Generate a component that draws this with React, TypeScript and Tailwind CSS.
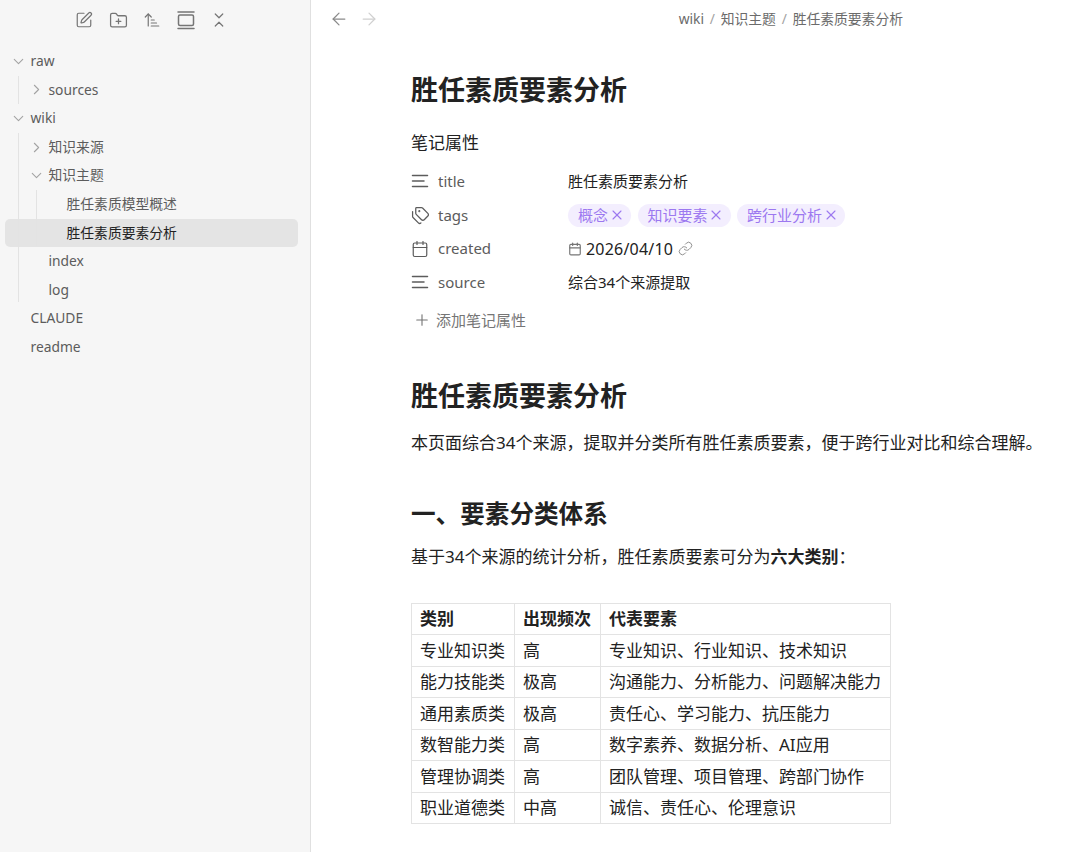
import {
  ArrowLeft,
  ArrowRight,
  ArrowUpNarrowWide,
  Calendar,
  ChevronDown,
  ChevronRight,
  ChevronsDownUp,
  FolderPlus,
  Link as LinkIcon,
  Plus,
  SquarePen,
  Tags,
  X,
} from "lucide-react";

const FONT = "font-['Noto_Sans','Noto_Sans_CJK_SC',sans-serif]";

interface TreeRow {
  label: string;
  depth: number;
  caret?: "open" | "closed";
  active?: boolean;
}

const TREE: TreeRow[] = [
  { label: "raw", depth: 0, caret: "open" },
  { label: "sources", depth: 1, caret: "closed" },
  { label: "wiki", depth: 0, caret: "open" },
  { label: "知识来源", depth: 1, caret: "closed" },
  { label: "知识主题", depth: 1, caret: "open" },
  { label: "胜任素质模型概述", depth: 2 },
  { label: "胜任素质要素分析", depth: 2, active: true },
  { label: "index", depth: 1 },
  { label: "log", depth: 1 },
  { label: "CLAUDE", depth: 0 },
  { label: "readme", depth: 0 },
];

const ROWS = [
  ["专业知识类", "高", "专业知识、行业知识、技术知识"],
  ["能力技能类", "极高", "沟通能力、分析能力、问题解决能力"],
  ["通用素质类", "极高", "责任心、学习能力、抗压能力"],
  ["数智能力类", "高", "数字素养、数据分析、AI应用"],
  ["管理协调类", "高", "团队管理、项目管理、跨部门协作"],
  ["职业道德类", "中高", "诚信、责任心、伦理意识"],
];

const TAGS = ["概念", "知识要素", "跨行业分析"];

function Lines() {
  return (
    <svg width="18" height="18" viewBox="0 0 18 18" fill="none" stroke="#5c5c5c" strokeWidth="1.5" strokeLinecap="round">
      <path d="M1.5 3.5h15M1.5 9h11.5M1.5 14.5h15" />
    </svg>
  );
}

function FrameIcon() {
  return (
    <svg width="18" height="20" viewBox="0 0 18 20" fill="none" stroke="#757575" strokeWidth="1.5" strokeLinecap="round">
      <path d="M1 2h16M1 18.5h16" />
      <rect x="1.5" y="5" width="15" height="10.5" rx="1.5" />
    </svg>
  );
}

function Sidebar() {
  const iconClass = "text-[#757575]";
  return (
    <aside className="flex h-full w-[311px] shrink-0 flex-col border-r border-[#e0e0e0] bg-[#f6f6f6]">
      <div className="flex h-[47px] shrink-0 items-center gap-[15.5px] pb-[7px] pl-[75px]">
        <SquarePen size={18} strokeWidth={1.6} className={iconClass} />
        <FolderPlus size={19} strokeWidth={1.6} className={iconClass} />
        <ArrowUpNarrowWide size={18} strokeWidth={1.6} className={iconClass} />
        <FrameIcon />
        <ChevronsDownUp size={18} strokeWidth={1.6} className={iconClass} />
      </div>
      <div className="relative pl-[5px] pr-[12px]">
        <div className="absolute left-[18px] top-[29px] h-[28px] w-px bg-[#e3e3e3]" />
        <div className="absolute left-[18px] top-[86px] h-[169px] w-px bg-[#e3e3e3]" />
        <div className="absolute left-[36px] top-[143px] h-[56px] w-px bg-[#e3e3e3]" />
        {TREE.map((row) => (
          <div
            key={row.label}
            className={`flex h-[28.6px] items-center rounded-[5px] text-[13.8px] ${
              row.active ? "bg-black/[0.07] text-[#222222]" : "text-[#5c5c5c]"
            }`}
            style={{ paddingLeft: 7 + row.depth * 18 }}
          >
            <span className="flex w-[18.5px] shrink-0 items-center justify-start">
              {row.caret === "open" && <ChevronDown size={17} strokeWidth={1.5} className="-ml-[2.5px] text-[#a3a3a3]" />}
              {row.caret === "closed" && <ChevronRight size={17} strokeWidth={1.5} className="-ml-[2.5px] text-[#a3a3a3]" />}
            </span>
            {row.label}
          </div>
        ))}
      </div>
    </aside>
  );
}

function PropRow({ icon, name, children }: { icon: React.ReactNode; name: string; children: React.ReactNode }) {
  return (
    <div className="flex h-[33.7px] items-center text-[15px]">
      <span className="flex w-[27px] shrink-0 items-center">{icon}</span>
      <span className="w-[130px] shrink-0 text-[#5c5c5c]">{name}</span>
      <div className="flex items-center text-[#222222]">{children}</div>
    </div>
  );
}

function Properties() {
  return (
    <div className="mt-[21px]">
      <div className="text-[17px] leading-[24px] text-[#222222]">笔记属性</div>
      <div className="mt-[9.5px]">
        <PropRow icon={<Lines />} name="title">
          胜任素质要素分析
        </PropRow>
        <PropRow icon={<Tags size={19} strokeWidth={1.6} className="text-[#5c5c5c]" />} name="tags">
          <div className="flex gap-[6.5px]">
            {TAGS.map((tag) => (
              <span
                key={tag}
                className="flex h-[23px] items-center gap-[3.5px] rounded-full bg-[#f3eefe] pl-[10px] pr-[9.5px] text-[#9c78f0]"
              >
                {tag}
                <X size={16} strokeWidth={1.6} className="-mx-[3px]" />
              </span>
            ))}
          </div>
        </PropRow>
        <PropRow icon={<Calendar size={18} strokeWidth={1.6} className="text-[#5c5c5c]" />} name="created">
          <Calendar size={14} strokeWidth={2} className="mr-[4px] text-[#757575]" />
          <span className="text-[16px] tracking-[0.2px]">2026/04/10</span>
          <LinkIcon size={15} strokeWidth={1.6} className="ml-[5px] text-[#8f8f8f]" />
        </PropRow>
        <PropRow icon={<Lines />} name="source">
          综合34个来源提取
        </PropRow>
      </div>
      <div className="mt-[8.5px] flex h-[24px] items-center gap-[5px] pl-[2px] text-[15px] text-[#757575]">
        <Plus size={18} strokeWidth={1.5} />
        添加笔记属性
      </div>
    </div>
  );
}

function DocTable() {
  const cell = "h-[31.5px] border border-[#e3e3e3] px-[8px] py-0 text-left";
  return (
    <table className="mt-[33px] w-[480px] table-fixed border-collapse text-[17px] text-[#222222]">
      <colgroup>
        <col className="w-[103px]" />
        <col className="w-[86px]" />
        <col />
      </colgroup>
      <thead>
        <tr>
          <th className={`${cell} font-bold`}>类别</th>
          <th className={`${cell} font-bold`}>出现频次</th>
          <th className={`${cell} font-bold`}>代表要素</th>
        </tr>
      </thead>
      <tbody>
        {ROWS.map((row) => (
          <tr key={row[0]}>
            {row.map((text) => (
              <td key={text} className={`${cell} whitespace-nowrap`}>
                {text}
              </td>
            ))}
          </tr>
        ))}
      </tbody>
    </table>
  );
}

export default function App() {
  return (
    <div className={`flex h-[852px] w-[1080px] overflow-hidden bg-white ${FONT}`}>
      <Sidebar />
      <main className="min-w-0 flex-1">
        <div className="flex h-[38px] items-center pl-[18px]">
          <ArrowLeft size={20} strokeWidth={1.5} className="text-[#8a8a8a]" />
          <ArrowRight size={20} strokeWidth={1.5} className="ml-[10px] text-[#d0d0d0]" />
          <div className="ml-auto flex items-center gap-[5.8px] pr-[177px] text-[13.8px] text-[#6b6b6b]">
            <span>wiki</span>
            <span className="text-[#a3a3a3]">/</span>
            <span>知识主题</span>
            <span className="text-[#a3a3a3]">/</span>
            <span>胜任素质要素分析</span>
          </div>
        </div>
        <div className="w-[769px] pl-[100px] text-[#222222]">
          <h1 className="mt-[32px] text-[27px] font-bold leading-[40px]">胜任素质要素分析</h1>
          <Properties />
          <h1 className="mt-[44px] text-[27px] font-bold leading-[40px]">胜任素质要素分析</h1>
          <p className="mt-[14px] whitespace-nowrap text-[17px] leading-[26px]">
            本页面综合34个来源，提取并分类所有胜任素质要素，便于跨行业对比和综合理解。
          </p>
          <h2 className="mt-[40px] text-[24.6px] font-bold leading-[36px]">一、要素分类体系</h2>
          <p className="mt-[12px] whitespace-nowrap text-[17px] leading-[26px]">
            基于34个来源的统计分析，胜任素质要素可分为<strong className="font-bold">六大类别</strong>：
          </p>
          <DocTable />
        </div>
      </main>
    </div>
  );
}
